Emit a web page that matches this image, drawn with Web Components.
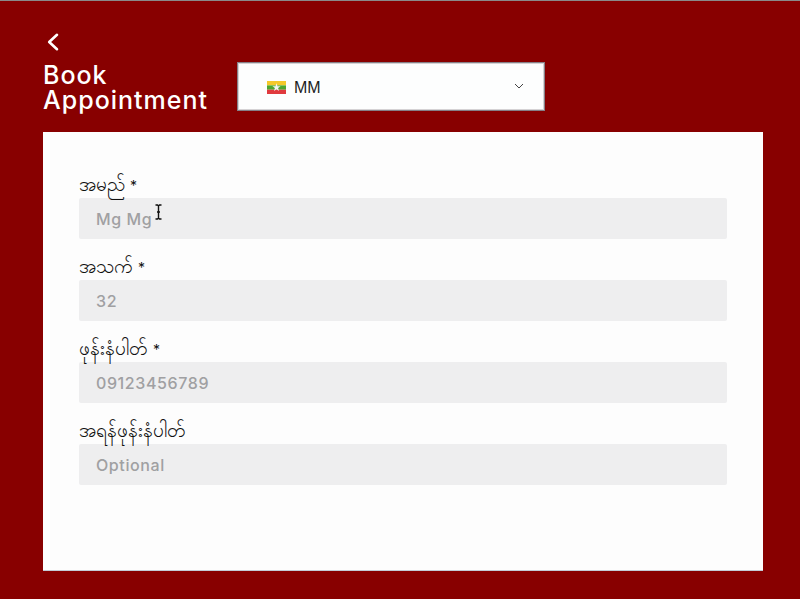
<!DOCTYPE html>
<html>
<head>
<meta charset="utf-8">
<title>Book Appointment</title>
<style>
html, body { margin: 0; height: 100%; }
body { background: #880000; font-family: Inter, "Noto Sans", sans-serif; }
</style>
</head>
<body>
<book-page>
  <book-header slot="header">
    <country-select code="MM"></country-select>
  </book-header>
  <form-field label="အမည်" required value="Mg Mg" cursor></form-field>
  <form-field label="အသက်" required value="32"></form-field>
  <form-field label="ဖုန်းနံပါတ်" required value="09123456789"></form-field>
  <form-field label="အရန်ဖုန်းနံပါတ်" value="Optional"></form-field>
</book-page>
<script>
class BookPage extends HTMLElement {
    constructor(){
        super();
        const root = this.attachShadow({mode: "open"});
        root.innerHTML = `
        <style>
        :host{
            display: flex;
            flex-direction: column;
            box-sizing: border-box;
            height: 599px;
            padding: 0 37px 28px 43px;
            border-top: 1px solid #8a8a8a;
            background: #880000;
        }
        .card{
            flex: 1;
            box-sizing: border-box;
            padding: 39px 36px 0;
            background: #fdfdfd;
            border-bottom: 1px solid #c3ccd6;
            display: flex;
            flex-direction: column;
            gap: 14px;
        }
        </style>
        <slot name="header"></slot>
        <div class="card"><slot></slot></div>
        `;
    }
}

class BookHeader extends HTMLElement {
    constructor(){
        super();
        const root = this.attachShadow({mode: "open"});
        root.innerHTML = `
        <style>
        :host{
            display: block;
            height: 131px;
            box-sizing: border-box;
            padding-top: 31px;
            color: #fff;
        }
        svg{ display: block; margin-left: 2px; }
        .row{
            display: flex;
            align-items: flex-start;
            gap: 29px;
            margin-top: 10px;
        }
        h1{
            margin: 1px 0 0;
            box-sizing: border-box;
            width: 165px;
            font: 500 25px/25px Inter, sans-serif;
            letter-spacing: 1px;
        }
        </style>
        <svg width="16" height="20" viewBox="0 0 16 20" fill="none" stroke="#fff" stroke-width="2.6" stroke-linecap="round" stroke-linejoin="round">
            <path d="M12 2.800 4.200 10 12 17.200"/>
        </svg>
        <div class="row">
            <h1>Book Appointment</h1>
            <slot></slot>
        </div>
        `;
    }
}

class CountrySelect extends HTMLElement {
    constructor(){
        super();
        const root = this.attachShadow({mode: "open"});
        root.innerHTML = `
        <style>
        :host{
            display: flex;
            align-items: center;
            box-sizing: border-box;
            width: 308px;
            height: 49px;
            padding: 2px 20px 0 29px;
            background: #fdfefe;
            border: 1px solid #858088;
            box-shadow: inset 0 0 0 1px #d5d3d5;
            color: #1c1c1c;
            font: 400 16px "Liberation Sans", sans-serif;
        }
        .code{ margin-left: 8px; flex: 1; }
        svg{ display: block; }
        svg.chev{ margin-top: -3px; }
        </style>
        <svg width="19" height="13" viewBox="0 0 19 13">
            <rect width="19" height="4.4" fill="#f5c82a"/>
            <rect y="4.4" width="19" height="4.3" fill="#4ea72e"/>
            <rect y="8.7" width="19" height="4.3" fill="#e03a3e"/>
            <path d="M9.500 2.200l1 3h3.100l-2.500 1.900.9 3-2.500-1.800L7 10.100l.9-3-2.500-1.900h3.100z" fill="#f4f4f4"/>
        </svg>
        <span class="code"></span>
        <svg class="chev" width="10" height="6" viewBox="0 0 10 6" fill="none" stroke="#444" stroke-width="1">
            <path d="M1 1l4 4 4-4"/>
        </svg>
        `;
        root.querySelector(".code").textContent = this.getAttribute("code");
    }
}

class FormField extends HTMLElement {
    constructor(){
        super();
        const root = this.attachShadow({mode: "open"});
        const star = this.hasAttribute("required") ? `<span class="star">*</span>` : "";
        const cursor = this.hasAttribute("cursor") ? `
            <svg class="cursor" width="9" height="16" viewBox="0 0 9 16" fill="none" stroke="#111" stroke-width="1.400">
                <path d="M1.500 1h2l1 1 1-1h2M4.500 2v12M1.500 15h2l1-1 1 1h2M3 8h3"/>
            </svg>` : "";
        root.innerHTML = `
        <style>
        :host{
            display: block;
            position: relative;
        }
        .label{
            height: 27px;
            font: 400 19px/27px "Noto Sans", "DejaVu Sans", sans-serif;
            color: #111;
            white-space: nowrap;
        }
        .star{
            font: 400 14px/1 Inter, sans-serif;
        }
        .box{
            box-sizing: border-box;
            height: 41px;
            padding: 0 17px;
            border-radius: 2px;
            background: #eeeeef;
            color: #a0a0a2;
            font: 500 16px/42px Inter, sans-serif;
            letter-spacing: 0.6px;
        }
        .cursor{
            position: absolute;
            left: 75px;
            top: 33px;
        }
        </style>
        <div class="label"><span class="text"></span> ${star}</div>
        <div class="box"></div>
        ${cursor}
        `;
        root.querySelector(".text").textContent = this.getAttribute("label");
        root.querySelector(".box").textContent = this.getAttribute("value");
    }
}

customElements.define("book-page", BookPage);
customElements.define("book-header", BookHeader);
customElements.define("country-select", CountrySelect);
customElements.define("form-field", FormField);
</script>
</body>
</html>
